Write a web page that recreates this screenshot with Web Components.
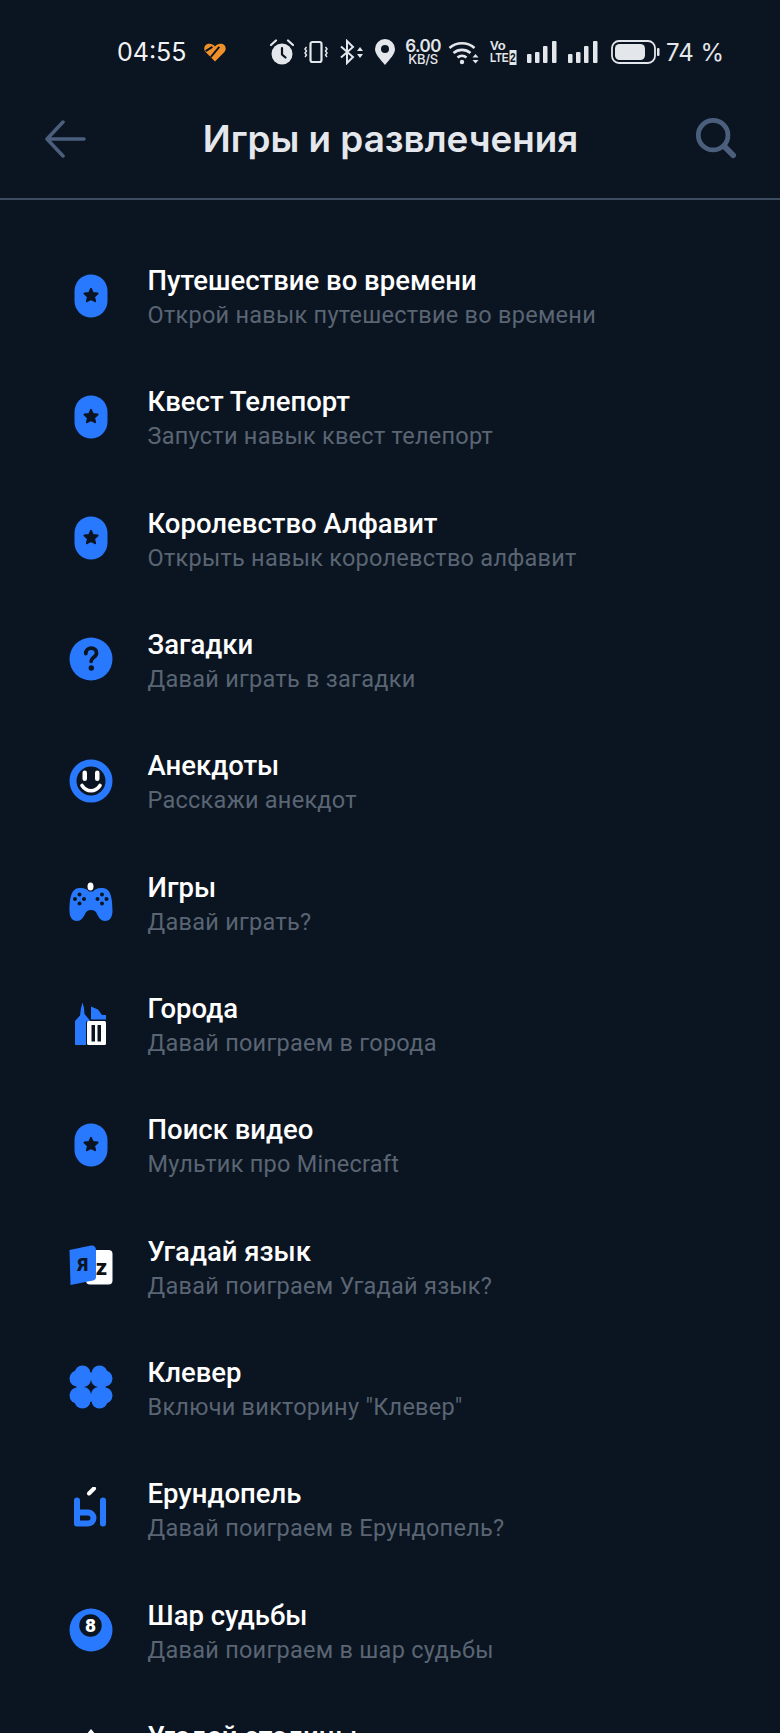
<!DOCTYPE html>
<html>
<head>
<meta charset="utf-8">
<style>
  html, body { margin: 0; background: #0b1421; height: 100%; overflow: hidden; }
  body { font-family: Roboto, "Noto Sans", sans-serif; }
</style>
</head>
<body>
<app-screen>
  <status-bar></status-bar>
  <top-bar heading="Игры и развлечения"></top-bar>
  <skill-list>
    <skill-row icon="star" heading="Путешествие во времени" sub="Открой навык путешествие во времени"></skill-row>
    <skill-row icon="star" heading="Квест Телепорт" sub="Запусти навык квест телепорт"></skill-row>
    <skill-row icon="star" heading="Королевство Алфавит" sub="Открыть навык королевство алфавит"></skill-row>
    <skill-row icon="question" heading="Загадки" sub="Давай играть в загадки"></skill-row>
    <skill-row icon="smile" heading="Анекдоты" sub="Расскажи анекдот"></skill-row>
    <skill-row icon="gamepad" heading="Игры" sub="Давай играть?"></skill-row>
    <skill-row icon="city" heading="Города" sub="Давай поиграем в города"></skill-row>
    <skill-row icon="star" heading="Поиск видео" sub="Мультик про Minecraft"></skill-row>
    <skill-row icon="lang" heading="Угадай язык" sub="Давай поиграем Угадай язык?"></skill-row>
    <skill-row icon="clover" heading="Клевер" sub="Включи викторину &quot;Клевер&quot;"></skill-row>
    <skill-row icon="yery" heading="Ерундопель" sub="Давай поиграем в Ерундопель?"></skill-row>
    <skill-row icon="ball" heading="Шар судьбы" sub="Давай поиграем в шар судьбы"></skill-row>
    <skill-row icon="capital" heading="Угадай столицы" sub="Давай поиграем в столицы"></skill-row>
  </skill-list>
</app-screen>
<script>
  const BLUE = "#2979ff";
  const DARK = "#0b1421";
  const STAR = `M0 -8.2 L2.3 -3 L8 -2.4 L3.7 1.4 L5 7 L0 4.1 L-5 7 L-3.7 1.4 L-8 -2.4 L-2.3 -3 Z`;
  // one clover leaf, upper left quadrant of the 44 box
  const LEAF = `<circle cx="13.5" cy="8.5" r="8"/><circle cx="8.5" cy="13.5" r="8"/><path d="M6 6H16L22 7.5V22H7.5L6 16z"/>`;

  // all skill icons are on a 44x44 box
  const ICONS = {
    star: `<rect x="5.5" y="0.5" width="33" height="43" rx="16.5" fill="${BLUE}"/>
      <path d="${STAR}" transform="translate(22 21.5) scale(.82)" fill="${DARK}" stroke="${DARK}" stroke-width="2.4" stroke-linejoin="round"/>`,
    question: `<circle cx="22" cy="22" r="21.5" fill="${BLUE}"/>
      <path d="M16.8 16.5c0-3.2 2.3-5.3 5.4-5.3 3.1 0 5.3 2 5.3 4.7 0 2.4-1.5 3.5-3 4.6-1.5 1.1-2.4 2-2.4 3.8" fill="none" stroke="${DARK}" stroke-width="3.8" stroke-linecap="round"/>
      <circle cx="22.3" cy="31" r="2.7" fill="${DARK}"/>`,
    smile: `<circle cx="22" cy="22" r="18" fill="${DARK}" stroke="${BLUE}" stroke-width="7"/>
      <rect x="13.5" y="11.5" width="4.5" height="10.5" rx="2.25" fill="#fff"/>
      <rect x="26" y="11.5" width="4.5" height="10.5" rx="2.25" fill="#fff"/>
      <path d="M13 26.5c2.5 3.8 5.8 5.3 9 5.3s6.5-1.5 9-5.3" fill="none" stroke="#fff" stroke-width="3.6" stroke-linecap="round"/>`,
    gamepad: `<path d="M10 8C15 7.5 18 9 20 11.5h4C26 9 29 7.5 34 8 40 8.5 43.5 14 43.5 31c0 7-3.5 10-7.5 10s-6-3-8-7c-1-2.5-3-4-6-4s-5 1.5-6 4c-2 4-4 7-8 7S.5 38 .5 31C.5 14 4 8.5 10 8z" fill="${BLUE}"/>
      <ellipse cx="21.5" cy="6.5" rx="3" ry="4" fill="#fff"/>
      <g fill="${DARK}"><circle cx="10.5" cy="14.5" r="2"/><circle cx="10.5" cy="23.5" r="2"/><circle cx="6" cy="19" r="2"/><circle cx="15" cy="19" r="2"/>
      <circle cx="33" cy="14.5" r="2"/><circle cx="33" cy="23.5" r="2"/><circle cx="28.5" cy="19" r="2"/><circle cx="37.5" cy="19" r="2"/></g>`,
    city: `<g transform="translate(-1 0)"><path d="M7 44V20L12 14.5 13 7l1.5-5.5L16 7l.5 6 5.5 6.5v1H18V44z" fill="${BLUE}"/>
      <path d="M23 5.5l7 3 4 5.5h4v4.5H23z" fill="${BLUE}"/>
      <rect x="19" y="20" width="19" height="24" rx="1.5" fill="#fff"/>
      <rect x="23.5" y="24" width="3.5" height="16.5" fill="${DARK}"/><rect x="29.5" y="24" width="3.5" height="16.5" fill="${DARK}"/></g>`,
    lang: `<rect x="17" y="6" width="26.5" height="34.5" rx="4" fill="#fff"/>
      <path d="M.5 6 22 1.5C25 1 27 3 27 6V33c0 2-1 3-3 3.5L1.5 41z" fill="${BLUE}"/>
      <text x="14" y="27" text-anchor="middle" font-family="Roboto, sans-serif" font-weight="900" font-size="18" fill="${DARK}">Я</text>
      <text x="32.5" y="30.5" text-anchor="middle" font-family="Roboto, sans-serif" font-weight="900" font-size="22" fill="#111">z</text>`,
    clover: `<g fill="${BLUE}">${LEAF}<g transform="matrix(-1 0 0 1 44 0)">${LEAF}</g><g transform="matrix(1 0 0 -1 0 44)">${LEAF}</g><g transform="matrix(-1 0 0 -1 44 44)">${LEAF}</g></g>
      <path d="M22 15c.8 4 3 6.2 7 7-4 .8-6.2 3-7 7-.8-4-3-6.2-7-7 4-.8 6.2-3 7-7z" fill="${DARK}"/>`,
    yery: `<path d="M8 13.5V36.5h11a5.5 5.5 0 0 0 0-11H8" fill="none" stroke="${BLUE}" stroke-width="6" stroke-linecap="round" stroke-linejoin="round"/>
      <rect x="31" y="10.5" width="6" height="29" rx="3" fill="${BLUE}"/>
      <path d="M20 6.5 25 1.5" stroke="#fff" stroke-width="4" stroke-linecap="round"/>`,
    ball: `<circle cx="22" cy="22" r="21.5" fill="${BLUE}"/>
      <circle cx="21.5" cy="17.5" r="11.2" fill="${DARK}"/>
      <text x="21.5" y="24.3" text-anchor="middle" font-family="Roboto, sans-serif" font-weight="900" font-size="19" fill="#fff">8</text>`,
    capital: `<path d="M22 0l5 6h-10z" fill="#fff"/><rect x="6" y="9" width="32" height="35" fill="${BLUE}"/>`
  };

  class AppScreen extends HTMLElement {
    constructor() {
      super();
      this.attachShadow({ mode: "open" }).innerHTML = `
        <style>
          :host { display: flex; flex-direction: column; width: 780px; height: 1733px; overflow: hidden; background: #0b1421; }
        </style>
        <slot></slot>`;
    }
  }

  class StatusBar extends HTMLElement {
    constructor() {
      super();
      const bars = `<rect x="0" y="13" width="4.5" height="9" rx="1" fill="#e3e6ea"/><rect x="8" y="11" width="4.5" height="11" rx="1" fill="#e3e6ea"/><rect x="16" y="5" width="4.5" height="17" rx="1" fill="#e3e6ea"/><rect x="25" y="0" width="4.5" height="22" rx="1" fill="#e3e6ea"/>`;
      this.attachShadow({ mode: "open" }).innerHTML = `
        <style>
          :host { display: flex; align-items: center; height: 40px; padding: 32px 0 0 117px; color: #e3e6ea; font-family: Inter, Roboto, sans-serif; flex: none; }
          .time { font-size: 25px; color: #f2f3f5; width: 86px; line-height: 40px; }
          svg { display: block; flex: none; }
          .speed { display: flex; flex-direction: column; align-items: center; line-height: 1; width: 38px; margin: 0 6px 0 8px; flex: none; }
          .speed b { font-size: 17px; font-weight: 600; letter-spacing: -0.5px; line-height: 14px; }
          .speed i { font-style: normal; font-weight: 500; font-size: 13px; line-height: 12px; letter-spacing: -0.3px; }
          .pct { font-size: 24px; margin-left: 5px; white-space: nowrap; font-weight: 400; }
          .volte { display: flex; flex-direction: column; align-items: flex-start; width: 27px; margin-left: 10px; flex: none; font-family: "Liberation Sans", sans-serif; font-weight: 700; }
          .volte .vo { font-size: 13px; line-height: 12px; }
          .volte .lte { font-size: 13px; line-height: 12px; white-space: nowrap; transform: scaleX(.78); transform-origin: left; }
          .volte .lte span { background: #e3e6ea; color: #0b1421; padding: 0 1px; margin-left: 1px; }
        </style>
        <span class="time">04:55</span>
        <svg width="24" height="22" viewBox="0 0 28 24" style="margin-right:42px">
          <path d="M14 23 3 12C0 9 1.5 3.5 6 2.5c3-.5 6 .5 8 3 2-2.5 5-3.5 8-3 4.5 1 6 6.5 3 9.5z" fill="#f0902a"/>
          <path d="M3 11l8-5M9 18l10-12" stroke="#0b1421" stroke-width="2.2" fill="none"/>
        </svg>
        <svg width="26" height="28" viewBox="0 0 26 28">
          <circle cx="13" cy="16" r="10.5" fill="#e3e6ea"/>
          <path d="M13 10v6.5l3.5 3" stroke="#0b1421" stroke-width="2.2" fill="none" stroke-linecap="round"/>
          <path d="M2 7l5-4.5M24 7l-5-4.5" stroke="#e3e6ea" stroke-width="2.2" stroke-linecap="round"/>
        </svg>
        <svg width="24" height="24" viewBox="0 0 24 24" style="margin-left:9px">
          <rect x="6.5" y="2" width="11" height="20" rx="2" fill="none" stroke="#e3e6ea" stroke-width="2.2"/>
          <path d="M2.5 7l-1.5 2 1.5 2-1.5 2 1.5 2-1.5 2M21.5 7l1.5 2-1.5 2 1.5 2-1.5 2 1.5 2" fill="none" stroke="#e3e6ea" stroke-width="1.5"/>
        </svg>
        <svg width="26" height="26" viewBox="0 0 26 26" style="margin-left:11px">
          <path d="M2 7.5 14 18l-6 6V2l6 6L2 18.5" fill="none" stroke="#e3e6ea" stroke-width="2"/>
          <path d="M18 12l3-4 3 4zM18 15l3 4 3-4z" fill="#e3e6ea"/>
        </svg>
        <svg width="22" height="28" viewBox="0 0 22 28" style="margin-left:9px">
          <path d="M11 27C6 21 1 16 1 11a10 10 0 0 1 20 0c0 5-5 10-10 16z" fill="#e3e6ea"/>
          <circle cx="11" cy="11" r="4" fill="#0b1421"/>
        </svg>
        <span class="speed"><b>6.00</b><i>KB/S</i></span>
        <svg width="32" height="26" viewBox="0 0 32 26">
          <path d="M1.5 9a19 19 0 0 1 25 0M5.5 14a13 13 0 0 1 17 0M9.5 18.5a7 7 0 0 1 9 0" fill="none" stroke="#e3e6ea" stroke-width="2.6"/>
          <circle cx="14" cy="23" r="2.2" fill="#e3e6ea"/>
          <path d="M24.5 18.5l3-3.5 3 3.5zM24.5 21l3 3.5 3-3.5z" fill="#e3e6ea"/>
        </svg>
        <span class="volte"><span class="vo">Vo</span><span class="lte">LTE<span>2</span></span></span>
        <svg width="30" height="22" viewBox="0 0 30 22" style="margin-left:10px">${bars}</svg>
        <svg width="30" height="22" viewBox="0 0 30 22" style="margin-left:11px">${bars}</svg>
        <svg width="50" height="24" viewBox="0 0 50 24" style="margin-left:13px">
          <rect x="1" y="1" width="43" height="22" rx="7" fill="none" stroke="#e3e6ea" stroke-width="1.8"/>
          <rect x="4" y="4" width="30" height="16" rx="4.5" fill="#e3e6ea"/>
          <rect x="46" y="8" width="2.5" height="8" rx="1" fill="#e3e6ea"/>
        </svg>
        <span class="pct">74 %</span>`;
    }
  }

  class TopBar extends HTMLElement {
    constructor() {
      super();
      this.attachShadow({ mode: "open" }).innerHTML = `
        <style>
          :host { display: grid; grid-template-columns: 1fr auto 1fr; align-items: center; flex: none; height: 128px; box-sizing: border-box; padding: 7px 43px 0 44px; border-bottom: 2px solid #3c4c60; }
          h1 { margin: 0; font: 600 36.8px Inter, Roboto, sans-serif; color: #e4e7eb; white-space: nowrap; }
          svg { display: block; }
          .search { justify-self: end; }
        </style>
        <svg width="42" height="38" viewBox="0 0 42 38"><path d="M40 19H3M19 2 3 19l16 17" fill="none" stroke="#4b5f7c" stroke-width="3.5" stroke-linecap="round" stroke-linejoin="round"/></svg>
        <h1>${this.getAttribute("heading")}</h1>
        <svg class="search" width="42" height="42" viewBox="0 0 44 44"><circle cx="19" cy="18" r="15.5" fill="none" stroke="#4b5f7c" stroke-width="5"/><path d="M31 30l9 9" stroke="#4b5f7c" stroke-width="6" stroke-linecap="round"/></svg>`;
    }
  }

  class SkillList extends HTMLElement {
    constructor() {
      super();
      this.attachShadow({ mode: "open" }).innerHTML = `
        <style>
          :host { display: flex; flex-direction: column; padding: 64px 0 0 69px; gap: 53.33px; flex: none; }
        </style>
        <slot></slot>`;
    }
  }

  class SkillRow extends HTMLElement {
    constructor() {
      super();
      const icon = ICONS[this.getAttribute("icon")] || "";
      this.attachShadow({ mode: "open" }).innerHTML = `
        <style>
          :host { display: flex; align-items: center; height: 68px; flex: none; }
          svg { display: block; flex: none; width: 44px; height: 44px; margin-right: 34.5px; position: relative; top: -2.5px; }
          .text { display: flex; flex-direction: column; white-space: nowrap; }
          .title { font: 500 27.5px/34px Roboto, sans-serif; color: #fff; }
          .sub { font: 400 23.5px/34px Roboto, sans-serif; color: #5a6573; letter-spacing: 0.26px; }
        </style>
        <svg viewBox="0 0 44 44">${icon}</svg>
        <div class="text">
          <span class="title">${this.getAttribute("heading")}</span>
          <span class="sub">${this.getAttribute("sub")}</span>
        </div>`;
    }
  }

  customElements.define("app-screen", AppScreen);
  customElements.define("status-bar", StatusBar);
  customElements.define("top-bar", TopBar);
  customElements.define("skill-list", SkillList);
  customElements.define("skill-row", SkillRow);
</script>
</body>
</html>
